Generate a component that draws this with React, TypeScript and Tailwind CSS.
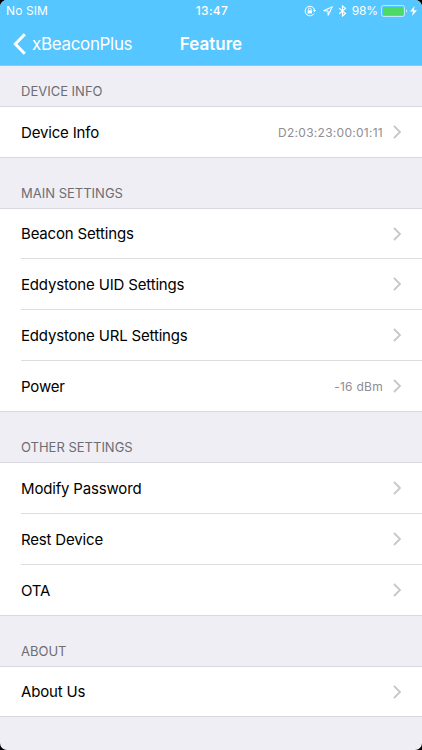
import React from 'react';

type Item = { label: string; value?: string; height?: string };
type Group = { title: string; items: Item[] };

const groups: Group[] = [
  { title: 'DEVICE INFO', items: [{ label: 'Device Info', value: 'D2:03:23:00:01:11' }] },
  {
    title: 'MAIN SETTINGS',
    items: [
      { label: 'Beacon Settings', height: 'h-[50px]' },
      { label: 'Eddystone UID Settings' },
      { label: 'Eddystone URL Settings' },
      { label: 'Power', value: '-16 dBm' },
    ],
  },
  { title: 'OTHER SETTINGS', items: [{ label: 'Modify Password' }, { label: 'Rest Device' }, { label: 'OTA' }] },
  { title: 'ABOUT', items: [{ label: 'About Us', height: 'h-[49px]' }] },
];

function StatusBar() {
  return (
    <div className="grid h-[22px] grid-cols-[1fr_auto_1fr] items-center pl-[6px] pr-[5px] text-[12px] leading-[22px]">
      <span className="tracking-[0.1px]">No SIM</span>
      <span className="pl-px font-medium tracking-[0.3px]">13:47</span>
      <div className="flex items-center justify-end">
        {/* rotation lock */}
        <svg className="mr-[7px] h-[12px] w-[12px]" viewBox="0 0 12 12" fill="none" stroke="white">
          <path d="M10 8.6A4.8 4.8 0 1 1 10.6 5" strokeWidth="1" />
          <path d="M8.8 5h3.200l-1.600 2.200z" fill="white" stroke="none" />
          <rect x="3.600" y="5.300" width="4.400" height="3.200" rx=".4" fill="white" stroke="none" />
          <path d="M4.500 5.400V4.300a1.300 1.300 0 0 1 2.600 0v1.100" strokeWidth=".9" />
        </svg>
        <svg className="mr-[5px] h-[10px] w-[10px]" viewBox="0 0 10 10" fill="none" stroke="white" strokeLinejoin="round">
          <path d="M9.300.700.700 4.800l4.300.200.200 4.300z" strokeWidth="1.100" />
        </svg>
        <svg className="mr-[5px] h-[12px] w-[9px]" viewBox="0 0 9 12" fill="none" stroke="white">
          <path d="m1.200 3.300 6.300 5.300-3 2.400V1l3 2.400-6.300 5.300" strokeWidth="1.200" />
        </svg>
        <span className="mr-[3px] tracking-[-0.1px]">98%</span>
        <svg className="mr-[2px] h-[12px] w-[27px]" viewBox="0 0 27 12">
          <rect x=".5" y=".5" width="23" height="11" rx="2" fill="none" stroke="white" strokeOpacity=".6" />
          <rect x="2" y="2" width="20" height="8" rx="1" fill="#4cd964" />
          <path d="M25 4.200v3.600c.900-.300 1.200-.900 1.200-1.800S25.900 4.500 25 4.200z" fill="white" fillOpacity=".6" />
        </svg>
        <svg className="h-[10px] w-[7px]" viewBox="0 0 6 10" preserveAspectRatio="none">
          <path d="M3.900 0 0 5.600h2.600L1.700 10 6 4.200H3.300z" fill="white" />
        </svg>
      </div>
    </div>
  );
}

function NavBar() {
  return (
    <div className="grid h-[43px] grid-cols-[1fr_auto_1fr] items-center px-[13px]">
      <div className="flex items-center gap-[6px]">
        <svg className="h-[22px] w-[13px]" viewBox="0 0 13 22" fill="none" stroke="white" strokeWidth="3">
          <path d="M11.800 1.300 2.300 11l9.500 9.700" />
        </svg>
        <span className="text-[17px] leading-5 tracking-[-0.34px]">xBeaconPlus</span>
      </div>
      <h1 className="text-[17px] font-semibold leading-5">Feature</h1>
    </div>
  );
}

function Row({ item, last }: { item: Item; last: boolean }) {
  const height = item.height ?? (last ? 'h-[50px]' : 'h-[51px]');
  return (
    <div className={`pl-[21px] ${height}`}>
      <div className={`flex h-full items-center pr-[21px] ${last ? '' : 'border-b border-[#dddddf]'}`}>
        <span className="mt-[2px] grow text-[15px] tracking-[-0.17px] text-black">{item.label}</span>
        {item.value && <span className="mr-[10px] mt-[2px] text-[12px] tracking-[0.27px] text-[#8e8e93]">{item.value}</span>}
        <svg className="h-[14px] w-[8px]" viewBox="0 0 8 14" fill="none" stroke="#c7c7cc" strokeWidth="1.800">
          <path d="m1 1 6 6-6 6" />
        </svg>
      </div>
    </div>
  );
}

export default function App() {
  return (
    <div className="h-[750px] w-full overflow-hidden bg-black font-['Inter','Liberation_Sans',sans-serif]">
      <div className="h-full overflow-hidden rounded-[7px] bg-[#efeef5]">
        <header className="h-[66px] border-b border-[#91c9e8] bg-[#55c6ff] text-white">
          <StatusBar />
          <NavBar />
        </header>
        <main>
          {groups.map((group, i) => (
            <section key={group.title}>
              <h2 className={`flex items-end pb-[6px] pl-[21px] text-[13px] leading-[17px] text-[#6d6d72] ${i === 0 ? 'h-[40px]' : 'h-[50px]'}`}>
                {group.title}
              </h2>
              <div className="border-y border-[#d9d8df] bg-white">
                {group.items.map((item, n) => (
                  <Row key={item.label} item={item} last={n === group.items.length - 1} />
                ))}
              </div>
            </section>
          ))}
        </main>
      </div>
    </div>
  );
}
